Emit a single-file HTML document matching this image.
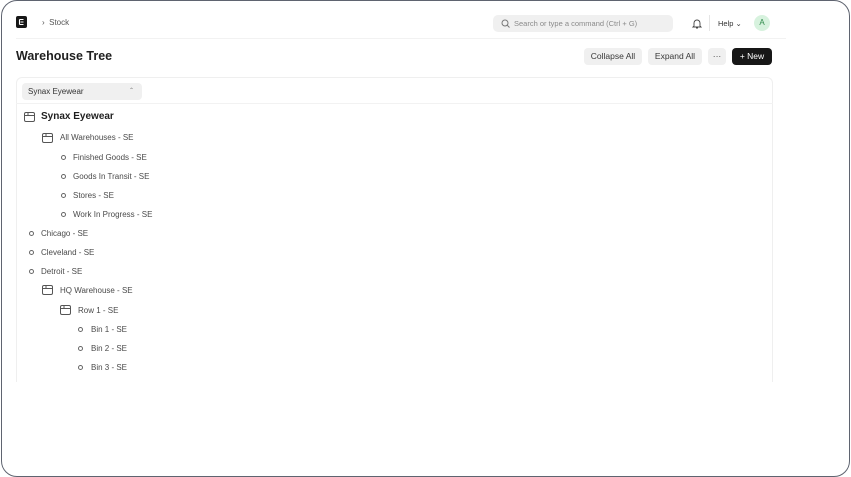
<!DOCTYPE html>
<html><head><style>
*{box-sizing:border-box;margin:0;padding:0}
body{width:851px;height:477px;background:#fff;font-family:"Liberation Sans",sans-serif;position:relative;overflow:hidden;color:#1f272e}
.frame{position:absolute;left:1px;top:0;width:849px;height:477px;border:1.5px solid #5f6470;border-radius:16px}
.a{position:absolute;white-space:nowrap}
.t{font-size:8px;color:#4a4a4a}
.c{position:absolute;width:5px;height:5px;border:1px solid #666;border-radius:50%}
.btn{position:absolute;top:48px;height:17px;background:#f0f0f0;border-radius:4px;font-size:8.5px;color:#383838;line-height:17px;text-align:center}
</style></head><body>
<div class="frame"></div>
<div class="a" style="left:16px;top:16px;width:11px;height:12px;background:#171717;border-radius:2px"></div>
<svg class="a" style="left:18px;top:18px" width="7" height="8" viewBox="0 0 7 8"><path d="M1.5 1.5h4M2.5 4h3M1.5 6.5h4M1.5 1.5v5" stroke="#fff" stroke-width="1.1" fill="none"/></svg>
<div class="a" style="left:42px;top:18px;font-size:8px;color:#555">›&nbsp; Stock</div>
<div class="a" style="left:16px;top:38px;width:770px;height:1px;background:#f2f2f2"></div>
<div class="a" style="left:493px;top:15px;width:180px;height:17px;background:#f0f0f0;border-radius:5px"></div>
<svg class="a" style="left:501px;top:19px" width="9" height="9" viewBox="0 0 9 9"><circle cx="4" cy="4" r="3" stroke="#777" fill="none"/><path d="M6.2 6.2L8.5 8.5" stroke="#777"/></svg>
<div class="a" style="left:514px;top:19px;font-size:7.5px;color:#8a8a8a">Search or type a command (Ctrl + G)</div>
<svg class="a" style="left:692px;top:18px" width="10" height="11" viewBox="0 0 10 11"><path d="M2 8V5a3 3 0 016 0v3l1 1H1zM4 10h2" stroke="#444" fill="none" stroke-width=".9"/></svg>
<div class="a" style="left:709px;top:15px;width:1px;height:16px;background:#e5e5e5"></div>
<div class="a" style="left:718px;top:19px;font-size:7.5px;color:#333">Help ⌄</div>
<div class="a" style="left:754px;top:15px;width:16px;height:16px;border-radius:50%;background:#d7f2de;color:#2f8a4a;font-size:8px;text-align:center;line-height:16px">A</div>
<div class="a" style="left:16px;top:49px;font-size:12.5px;font-weight:bold;color:#1f1f1f">Warehouse Tree</div>
<div class="btn" style="left:584px;width:58px">Collapse All</div>
<div class="btn" style="left:648px;width:54px">Expand All</div>
<div class="btn" style="left:708px;width:18px">···</div>
<div class="btn" style="left:732px;width:40px;background:#171717;color:#fff">+ New</div>
<div class="a" style="left:16px;top:77px;width:757px;height:305px;border:1px solid #efefef;border-bottom:none;border-radius:6px 6px 0 0"></div>
<div class="a" style="left:22px;top:83px;width:120px;height:17px;background:#f0f0f0;border-radius:4px;font-size:8px;color:#333;line-height:17px;padding-left:6px">Synax Eyewear<span style="position:absolute;left:107px;font-size:6px;color:#777">⌃</span></div>
<div class="a" style="left:16px;top:103px;width:757px;height:1px;background:#f2f2f2"></div>
<svg class="a" style="left:24px;top:112px" width="11" height="10" viewBox="0 0 11 10"><rect x=".5" y=".5" width="10" height="9" rx="1.5" stroke="#555" fill="none"/><path d="M.5 3.5h10M4 .5v3" stroke="#555" fill="none"/></svg>
<div class="a" style="left:41px;top:111px;font-size:10px;font-weight:bold;color:#1f1f1f">Synax Eyewear</div>
<svg class="a" style="left:42px;top:133px" width="11" height="10" viewBox="0 0 11 10"><rect x=".5" y=".5" width="10" height="9" rx="1.5" stroke="#555" fill="none"/><path d="M.5 3.5h10M4 .5v3" stroke="#555" fill="none"/></svg>
<div class="a t" style="left:60px;top:133px">All Warehouses - SE</div>
<div class="c" style="left:61px;top:155px"></div><div class="a t" style="left:73px;top:153px">Finished Goods - SE</div>
<div class="c" style="left:61px;top:174px"></div><div class="a t" style="left:73px;top:172px">Goods In Transit - SE</div>
<div class="c" style="left:61px;top:193px"></div><div class="a t" style="left:73px;top:191px">Stores - SE</div>
<div class="c" style="left:61px;top:212px"></div><div class="a t" style="left:73px;top:210px">Work In Progress - SE</div>
<div class="c" style="left:29px;top:231px"></div><div class="a t" style="left:41px;top:229px">Chicago - SE</div>
<div class="c" style="left:29px;top:250px"></div><div class="a t" style="left:41px;top:248px">Cleveland - SE</div>
<div class="c" style="left:29px;top:269px"></div><div class="a t" style="left:41px;top:267px">Detroit - SE</div>
<svg class="a" style="left:42px;top:285px" width="11" height="10" viewBox="0 0 11 10"><rect x=".5" y=".5" width="10" height="9" rx="1.5" stroke="#555" fill="none"/><path d="M.5 3.5h10M4 .5v3" stroke="#555" fill="none"/></svg>
<div class="a t" style="left:60px;top:286px">HQ Warehouse - SE</div>
<svg class="a" style="left:60px;top:305px" width="11" height="10" viewBox="0 0 11 10"><rect x=".5" y=".5" width="10" height="9" rx="1.5" stroke="#555" fill="none"/><path d="M.5 3.5h10M4 .5v3" stroke="#555" fill="none"/></svg>
<div class="a t" style="left:78px;top:306px">Row 1 - SE</div>
<div class="c" style="left:78px;top:327px"></div><div class="a t" style="left:91px;top:325px">Bin 1 - SE</div>
<div class="c" style="left:78px;top:346px"></div><div class="a t" style="left:91px;top:344px">Bin 2 - SE</div>
<div class="c" style="left:78px;top:365px"></div><div class="a t" style="left:91px;top:363px">Bin 3 - SE</div>
</body></html>
